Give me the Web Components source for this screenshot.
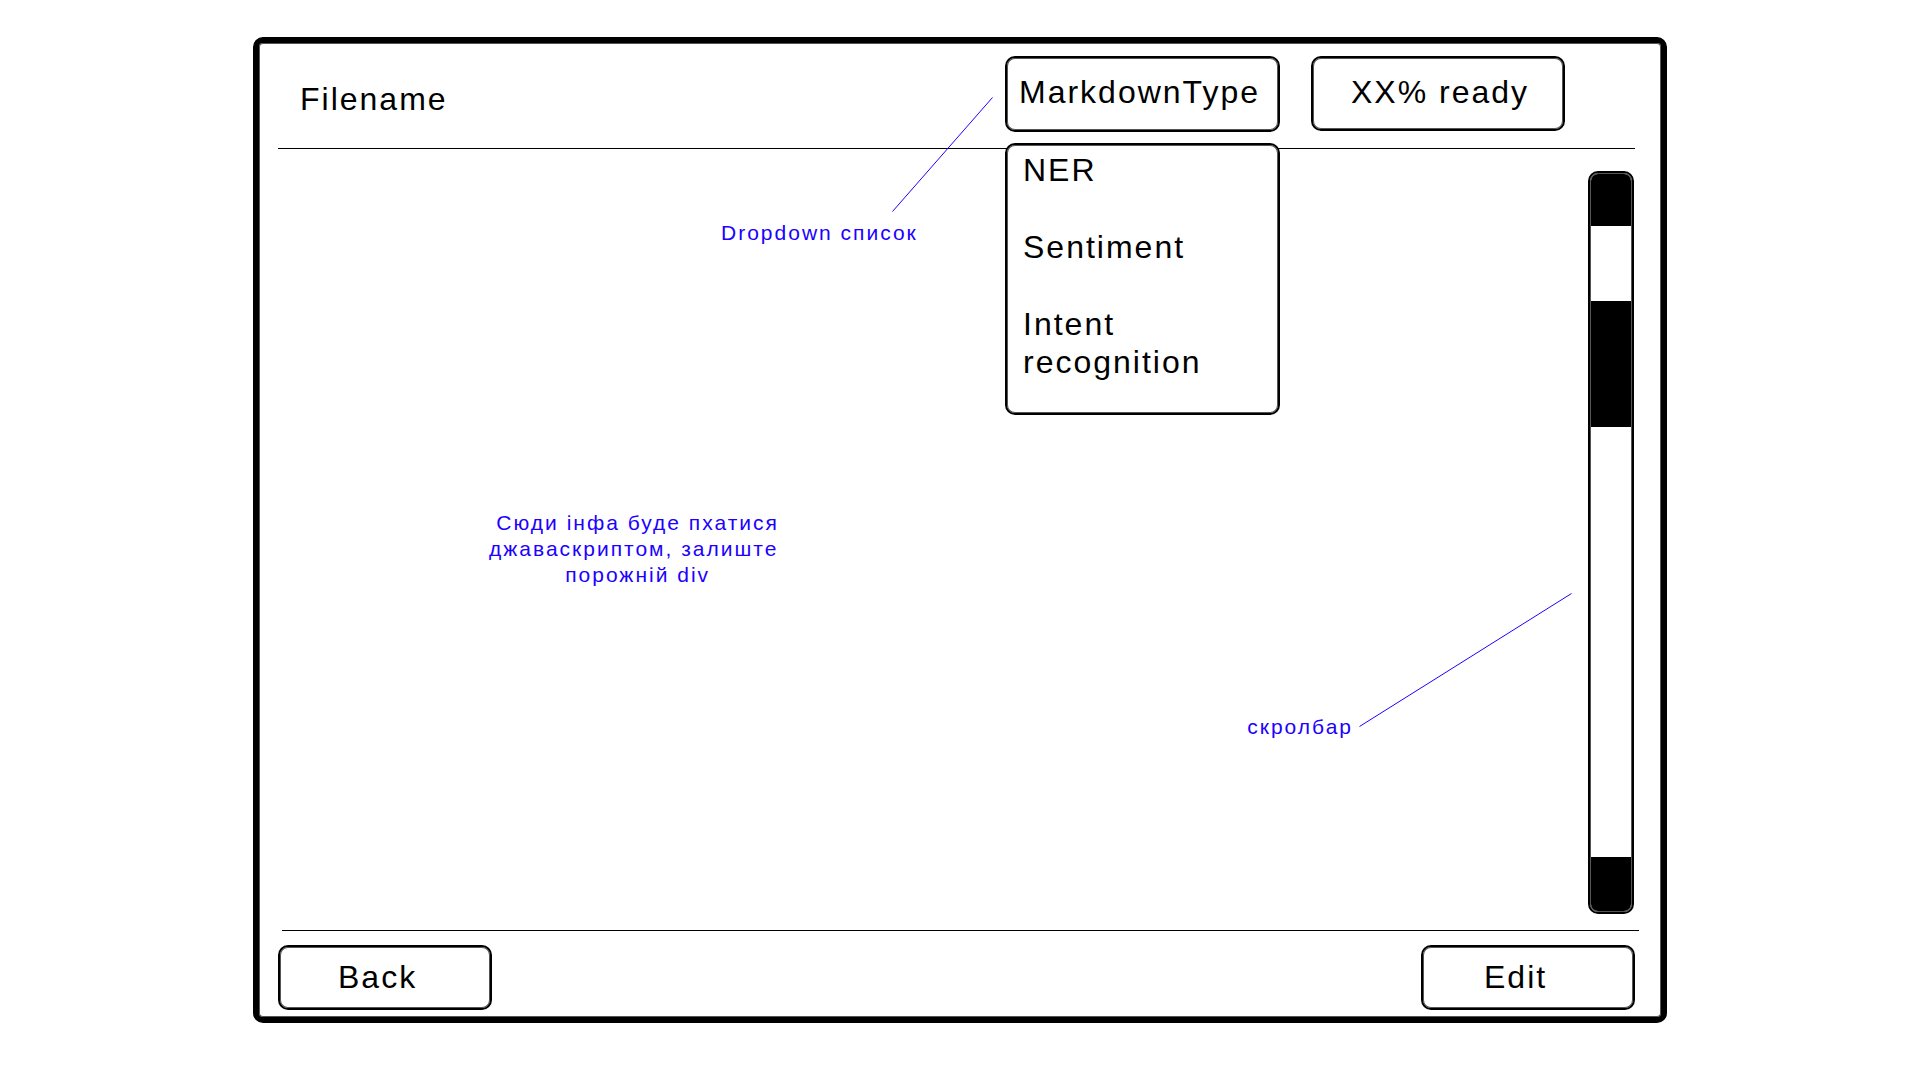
<!DOCTYPE html>
<html lang="uk">
<head>
<meta charset="utf-8">
<title>Markdown file view</title>
<style>
  :root {
    --ink: #000;
    --edge: #555;
    --note: #2000ff;
  }
  body {
    margin: 0;
    background: #fff;
    color: var(--ink);
    font: 32px/38px "Liberation Sans", Arial, sans-serif;
    letter-spacing: 2px;
  }
</style>
</head>
<body>
<file-view></file-view>

<script>
const boxed = `
  box-sizing: border-box;
  border: 2px solid var(--ink);
  border-radius: 10px;
  box-shadow: inset 0 0 0 1px var(--edge);
  background: #fff;
  color: inherit;
  font: inherit;
  letter-spacing: inherit;
`;

class BaseElement extends HTMLElement {
  constructor() {
    super();
    this.attachShadow({ mode: "open" }).innerHTML = this.constructor.markup;
  }
}

/* Outlined push button; the label comes in through the slot. */
class WireButton extends BaseElement {
  static markup = `
    <style>
      :host { display: block; width: 214px; }
      button {
        ${boxed}
        display: block; width: 100%; margin: 0;
        padding: 11px 0 12px var(--label-inset, 58px);
        text-align: left;
      }
    </style>
    <button type="button"><slot></slot></button>`;
}

/* Progress readout in the header. */
class ReadyBadge extends BaseElement {
  static markup = `
    <style>
      :host { display: block; width: 254px; }
      output { ${boxed} display: block; padding: 15px 0 18px 38px; white-space: nowrap; }
    </style>
    <output><slot></slot></output>`;
}

/* Designer's remark: a leader line and its caption. */
class DesignNote extends BaseElement {
  static markup = `
    <style>
      :host { display: block; color: var(--note); font-size: 21px; line-height: 26px; white-space: nowrap; }
      p { margin: 0; }
      ::slotted(svg) { display: block; }
    </style>
    <slot name="leader"></slot>
    <p><slot></slot></p>`;
}

/* Markdown type selector with its list expanded. */
class TypeDropdown extends BaseElement {
  static markup = `
    <style>
      :host { display: block; position: relative; width: 275px; }
      select {
        ${boxed}
        appearance: none; display: block; width: 100%; margin: 0;
        padding: 15px 0 19px 12px; line-height: 38px; height: 76px;
      }
      ul {
        ${boxed}
        position: absolute; top: 87px; left: 0; width: 100%;
        margin: 0; padding: 6px 14px 32px 16px;
        list-style: none; display: flex; flex-direction: column; gap: 39px;
      }
      button {
        display: block; width: 100%; margin: 0; padding: 0; border: 0; background: none;
        color: inherit; font: inherit; letter-spacing: inherit; text-align: left;
      }
      design-note {
        position: absolute; top: 41px; right: calc(100% + 12px); width: 272px;
        display: flex; flex-direction: column; gap: 8px;
      }
      svg { align-self: flex-end; }
    </style>
    <select aria-label="Markdown type"><option>MarkdownType</option></select>
    <ul aria-label="Markdown types">
      <li><button type="button">NER</button></li>
      <li><button type="button">Sentiment</button></li>
      <li><button type="button">Intent recognition</button></li>
    </ul>
    <design-note>
      <svg slot="leader" width="101" height="115" viewBox="0 0 101 115" aria-hidden="true">
        <path d="M0.5 114.5 100.5 0.5" stroke="#2000ff" fill="none"/>
      </svg>
      Dropdown список
    </design-note>`;
}

class TopBar extends BaseElement {
  static markup = `
    <style>
      :host { display: block; }
      header {
        display: flex; align-items: flex-start; gap: 31px;
        box-sizing: border-box; height: 105px;
        margin: 0 25px 0 18px; padding: 12px 70px 0 22px;
        border-bottom: 1px solid var(--ink);
      }
      h1 { flex: 1; margin: 24px 0 0; font: inherit; }
    </style>
    <header>
      <h1>Filename</h1>
      <type-dropdown></type-dropdown>
      <ready-badge>XX% ready</ready-badge>
    </header>`;
}

/* Vertical scrollbar: end buttons and a thumb in the track. */
class WireScrollbar extends BaseElement {
  static markup = `
    <style>
      :host { display: flex; position: relative; width: 46px; }
      .bar { ${boxed} flex: 1; display: flex; flex-direction: column; padding: 1px; }
      button { height: 52px; margin: 0; padding: 0; border: 0; background: var(--ink); }
      button:first-child { border-radius: 7px 7px 0 0; }
      button:last-child { height: 54px; border-radius: 0 0 7px 7px; }
      .track { flex: 1; display: flex; flex-direction: column; }
      .before { flex: 75; }
      .thumb { flex: 126; background: var(--ink); }
      .after { flex: 430; }
      design-note {
        position: absolute; right: calc(100% + 16px); bottom: 174px;
        display: flex; flex-direction: row-reverse; align-items: flex-end; gap: 6px;
      }
      svg { margin-bottom: 13px; }
    </style>
    <div class="bar">
      <button type="button" aria-label="Scroll up"></button>
      <div class="track"><div class="before"></div><div class="thumb"></div><div class="after"></div></div>
      <button type="button" aria-label="Scroll down"></button>
    </div>
    <design-note>
      <svg slot="leader" width="213" height="134" viewBox="0 0 213 134" aria-hidden="true">
        <path d="M0.5 133.5 212.5 0.5" stroke="#2000ff" fill="none"/>
      </svg>
      скролбар
    </design-note>`;
}

class FileContent extends BaseElement {
  static markup = `
    <style>
      :host { display: block; flex: 1; }
      main { display: flex; box-sizing: border-box; height: 100%; padding: 22px 26px 16px 18px; }
      .body { flex: 1; display: flex; align-items: flex-start; padding: 339px 0 0 211px; }
      design-note { text-align: center; }
    </style>
    <main>
      <div class="body">
        <design-note>Сюди інфа буде пхатися<br>джаваскриптом, залиште&nbsp;<br>порожній div</design-note>
      </div>
      <wire-scrollbar></wire-scrollbar>
    </main>`;
}

class BottomBar extends BaseElement {
  static markup = `
    <style>
      :host { display: block; }
      hr { margin: 0 21px 0 22px; border: 0; border-top: 1px solid var(--ink); }
      footer { display: flex; justify-content: space-between; padding: 14px 25px 6px 18px; }
      .edit { --label-inset: 61px; }
    </style>
    <hr>
    <footer>
      <wire-button>Back</wire-button>
      <wire-button class="edit">Edit</wire-button>
    </footer>`;
}

class FileView extends BaseElement {
  static markup = `
    <style>
      :host { display: flex; box-sizing: border-box; min-height: 100vh; padding: 37px 253px 57px; }
      .frame {
        flex: 1; display: flex; flex-direction: column;
        border: 6px solid var(--ink); border-radius: 10px;
        box-shadow: inset 0 0 0 1px var(--edge); padding: 1px;
      }
    </style>
    <div class="frame">
      <top-bar></top-bar>
      <file-content></file-content>
      <bottom-bar></bottom-bar>
    </div>`;
}

customElements.define("wire-button", WireButton);
customElements.define("ready-badge", ReadyBadge);
customElements.define("design-note", DesignNote);
customElements.define("type-dropdown", TypeDropdown);
customElements.define("top-bar", TopBar);
customElements.define("wire-scrollbar", WireScrollbar);
customElements.define("file-content", FileContent);
customElements.define("bottom-bar", BottomBar);
customElements.define("file-view", FileView);
</script>
</body>
</html>
